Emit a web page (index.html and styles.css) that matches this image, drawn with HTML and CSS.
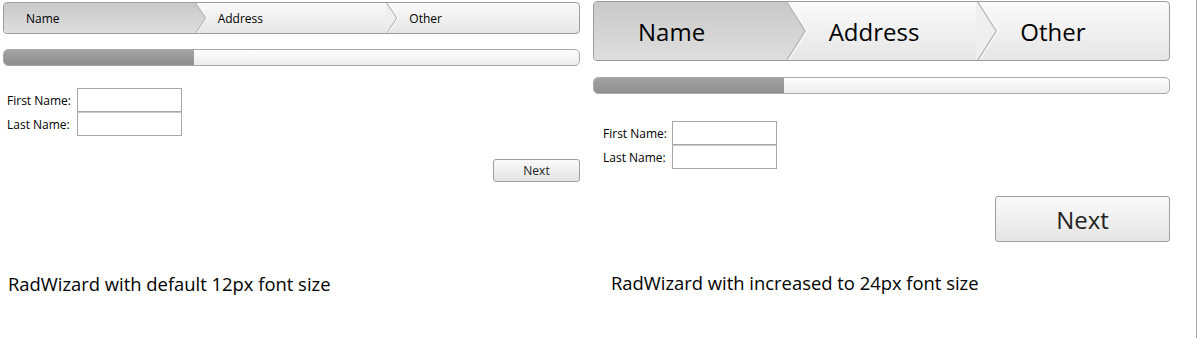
FILE: index.html
```html
<!DOCTYPE html>
<html>
<head>
<meta charset="utf-8">
<link rel="stylesheet" href="styles.css">
</head>
<body>
<div class="page">
  <section class="demo small">
    <div class="wizard">
      <nav class="steps">
        <div class="step sel"><span>Name</span>
          <svg class="chev" viewBox="0 0 12 32" preserveAspectRatio="none"><defs><linearGradient id="g1" x1="0" y1="0" x2="0" y2="1"><stop offset="0" stop-color="#c9c9c9"/><stop offset="1" stop-color="#dedede"/></linearGradient></defs><polygon points="0,0 1,0 11,16 1,32 0,32" fill="url(#g1)"/><polyline points="1,0 11,16 1,32" fill="none" stroke="#b9b9b9" stroke-width="1.4" vector-effect="non-scaling-stroke"/><polyline points="2,0 12,16 2,32" fill="none" stroke="#fff" stroke-width="1" vector-effect="non-scaling-stroke"/></svg>
        </div>
        <div class="step"><span>Address</span>
          <svg class="chev" viewBox="0 0 12 32" preserveAspectRatio="none"><polygon points="0,0 1,0 11,16 1,32 0,32" fill="#efefef"/><polyline points="1,0 11,16 1,32" fill="none" stroke="#b9b9b9" stroke-width="1.4" vector-effect="non-scaling-stroke"/><polyline points="2,0 12,16 2,32" fill="none" stroke="#fff" stroke-width="1" vector-effect="non-scaling-stroke"/></svg>
        </div>
        <div class="step last"><span>Other</span></div>
      </nav>
      <div class="progress"><div class="fill"></div></div>
      <div class="form">
        <div class="row"><label>First Name:</label><input type="text"></div>
        <div class="row"><label>Last Name:</label><input type="text"></div>
      </div>
      <div class="actions"><button class="next">Next</button></div>
    </div>
    <p class="caption">RadWizard with default 12px font size</p>
  </section>
  <section class="demo large">
    <div class="wizard">
      <nav class="steps">
        <div class="step sel"><span>Name</span>
          <svg class="chev" viewBox="0 0 12 32" preserveAspectRatio="none"><defs><linearGradient id="g2" x1="0" y1="0" x2="0" y2="1"><stop offset="0" stop-color="#c9c9c9"/><stop offset="1" stop-color="#dedede"/></linearGradient></defs><polygon points="0,0 1,0 11,16 1,32 0,32" fill="url(#g2)"/><polyline points="1,0 11,16 1,32" fill="none" stroke="#b9b9b9" stroke-width="1.4" vector-effect="non-scaling-stroke"/><polyline points="2,0 12,16 2,32" fill="none" stroke="#fff" stroke-width="1" vector-effect="non-scaling-stroke"/></svg>
        </div>
        <div class="step"><span>Address</span>
          <svg class="chev" viewBox="0 0 12 32" preserveAspectRatio="none"><polygon points="0,0 1,0 11,16 1,32 0,32" fill="#efefef"/><polyline points="1,0 11,16 1,32" fill="none" stroke="#b9b9b9" stroke-width="1.4" vector-effect="non-scaling-stroke"/><polyline points="2,0 12,16 2,32" fill="none" stroke="#fff" stroke-width="1" vector-effect="non-scaling-stroke"/></svg>
        </div>
        <div class="step last"><span>Other</span></div>
      </nav>
      <div class="progress"><div class="fill"></div></div>
      <div class="form">
        <div class="row"><label>First Name:</label><input type="text"></div>
        <div class="row"><label>Last Name:</label><input type="text"></div>
      </div>
      <div class="actions"><button class="next">Next</button></div>
    </div>
    <p class="caption">RadWizard with increased to 24px font size</p>
  </section>
</div>
</body>
</html>
```
FILE: styles.css
```css
html, body {
  margin: 0;
  padding: 0;
  background: #fff;
}
body {
  font-family: "Open Sans", "Noto Sans", sans-serif;
  color: #000;
}
.page {
  display: flex;
  width: 1197px;
  height: 338px;
  border-right: 1px solid #a8a8a8;
  box-sizing: border-box;
}
.demo {
  width: 577px;
  display: flex;
  flex-direction: column;
}
.demo.small {
  padding: 2px 0 0 3px;
}
.demo.large {
  padding: 1px 0 0 13px;
}
.wizard {
  width: 577px;
}
.steps {
  display: flex;
  border: 1px solid #9c9c9c;
  border-radius: 4px;
  box-sizing: border-box;
  background: linear-gradient(#fafafa, #e6e6e6);
  overflow: visible;
}
.step {
  flex: 1;
  position: relative;
  display: flex;
  align-items: center;
}
.step.sel {
  background: linear-gradient(#c9c9c9, #dedede);
  border-radius: 3px 0 0 3px;
}
.step.last {
  border-radius: 0 3px 3px 0;
}
.chev {
  position: absolute;
  top: 0;
  height: 100%;
  z-index: 2;
}
.small .steps { height: 32px; }
.small .step span { font-size: 12px; padding-left: 22px; }
.small .step + .step span { padding-left: 22px; }
.small .chev { right: -11px; width: 12px; }
.large .steps { height: 60px; }
.large .step span { font-size: 24px; padding-left: 44px; }
.large .step + .step span { padding-left: 43px; }
.large .chev { right: -21px; width: 22px; }

.progress {
  border: 1px solid #a9a9a9;
  border-radius: 5px;
  box-sizing: border-box;
  background: linear-gradient(#fdfdfd, #ececec);
  overflow: hidden;
  height: 17px;
}
.fill {
  width: 33%;
  height: 100%;
  background: linear-gradient(#a3a3a3, #8e8e8e);
}
.small .progress { margin-top: 15px; }
.large .progress { margin-top: 16px; }

.form {
  display: flex;
  flex-direction: column;
}
.row {
  display: flex;
  align-items: center;
}
.row label {
  font-size: 12px;
  width: 70px;
}
.row input {
  width: 105px;
  height: 24px;
  box-sizing: border-box;
  border: 1px solid #a6a6a6;
  margin: 0;
  padding: 0;
  background: #fff;
}
.row + .row input { border-top-color: #c8c8c8; }
.small .form { margin-top: 22px; padding-left: 4px; }
.large .form { margin-top: 27px; padding-left: 10px; }
.large .row label { width: 69px; }

.actions {
  display: flex;
  justify-content: flex-end;
}
.next {
  font-family: "Open Sans", "Noto Sans", sans-serif;
  border: 1px solid #9f9f9f;
  border-radius: 3px;
  background: linear-gradient(#fafafa, #e4e4e4);
  color: #222;
  padding: 0;
}
.small .actions { margin-top: 23px; }
.small .next { width: 87px; height: 23px; font-size: 12px; }
.large .actions { margin-top: 27px; }
.large .next { width: 175px; height: 46px; font-size: 24px; }

.caption {
  font-size: 18.4px;
  margin: 0;
  font-family: "Open Sans", "Noto Sans", sans-serif;
}
.small .caption { margin-top: 89px; padding-left: 5px; }
.large .caption { margin-top: 28px; padding-left: 18px; }
```
